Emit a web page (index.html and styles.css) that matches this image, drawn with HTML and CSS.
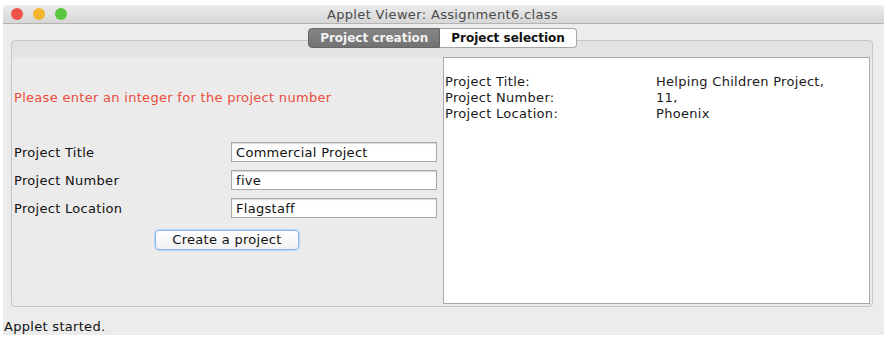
FILE: index.html
```html
<!DOCTYPE html>
<html>
<head>
<meta charset="utf-8">
<link rel="stylesheet" href="styles.css">
</head>
<body>
<div class="window">
  <div class="titlebar">
    <div class="lights">
      <span class="light red"></span>
      <span class="light yellow"></span>
      <span class="light green"></span>
    </div>
    <div class="title">Applet Viewer: Assignment6.class</div>
  </div>
  <div class="main">
    <div class="tabs">
      <span class="tab active">Project creation</span>
      <span class="tab">Project selection</span>
    </div>
    <div class="panel">
      <div class="leftcol">
        <div class="message">Please enter an integer for the project number</div>
        <div class="form">
          <label class="label">Project Title</label>
          <div class="field">Commercial Project</div>
          <label class="label">Project Number</label>
          <div class="field">five</div>
          <label class="label">Project Location</label>
          <div class="field">Flagstaff</div>
        </div>
        <div class="btnrow"><button class="button">Create a project</button></div>
      </div>
      <div class="textarea">
        <div class="info">
          <span>Project Title:</span><span>Helping Children Project,</span>
          <span>Project Number:</span><span>11,</span>
          <span>Project Location:</span><span>Phoenix</span>
        </div>
      </div>
    </div>
  </div>
  <div class="status">Applet started.</div>
</div>
</body>
</html>
```
FILE: styles.css
```css
html, body {
  margin: 0;
  padding: 0;
  background: #ffffff;
}
body {
  font-family: "DejaVu Sans", "Noto Sans", sans-serif;
  font-size: 13px;
  letter-spacing: 0.3px;
  color: #111;
}
.window {
  margin: 5px 0 0 3px;
  width: 881px;
  height: 330px;
  background: #ececec;
  border-radius: 4px 4px 0 0;
  display: flex;
  flex-direction: column;
  overflow: hidden;
}
.titlebar {
  height: 19px;
  border-bottom: 1px solid #b3b3b3;
  background: linear-gradient(#ebebeb, #d6d6d6);
  display: flex;
  align-items: center;
}
.lights {
  display: flex;
  gap: 10px;
  padding-left: 8px;
}
.light {
  width: 12px;
  height: 12px;
  border-radius: 50%;
  display: block;
}
.red { background: #f0524c; }
.yellow { background: #f6b52e; }
.green { background: #5ac63f; }
.title {
  flex: 1;
  text-align: center;
  font-size: 13px;
  letter-spacing: 0.35px;
  color: #4a4a4a;
  margin-left: -66px;
  padding-top: 1px;
}
.main {
  padding: 4px 11px 0 8px;
  display: flex;
  flex-direction: column;
}
.tabs {
  display: flex;
  justify-content: center;
  height: 20px;
  position: relative;
  z-index: 2;
  padding-left: 1px;
}
.tab {
  box-sizing: border-box;
  height: 20px;
  line-height: 18px;
  font-weight: bold;
  font-size: 12px;
  letter-spacing: 0;
  padding: 0 11px;
  background: #fdfdfd;
  border: 1px solid #a6a6a6;
  border-left: none;
  border-radius: 0 4px 4px 0;
  color: #111;
}
.tab.active {
  background: linear-gradient(#858585, #727272);
  color: #f2f2f2;
  border: 1px solid #666;
  border-radius: 4px 0 0 4px;
}
.panel {
  margin-top: -8px;
  height: 267px;
  box-sizing: border-box;
  border: 1px solid #c6c6c6;
  border-radius: 4px;
  background: linear-gradient(#e2e2e2 0, #e4e4e4 16px, #ebebeb 17px, #ebebeb);
  padding: 16px 2px 2px 0;
  display: flex;
}
.leftcol {
  width: 431px;
  display: flex;
  flex-direction: column;
}
.message {
  margin-top: 33px;
  line-height: 16px;
  color: #ea4d3c;
  padding-left: 2px;
}
.form {
  margin-top: 36px;
  display: grid;
  grid-template-columns: 219px 206px;
  grid-auto-rows: 20px;
  row-gap: 8px;
  align-items: center;
}
.label {
  padding-left: 2px;
  line-height: 22px;
  height: 20px;
}
.field {
  box-sizing: border-box;
  height: 20px;
  line-height: 19px;
  border: 1px solid #a8a8a8;
  box-shadow: inset 0 1px 1px #d8d8d8;
  background: #fff;
  padding-left: 4px;
}
.btnrow {
  margin-top: 12px;
  display: flex;
  justify-content: center;
  padding-right: 1px;
}
.button {
  width: 144px;
  height: 20px;
  box-sizing: border-box;
  border: 1px solid #86b6ea;
  border-radius: 4px;
  background: linear-gradient(#ffffff, #f1f1f1);
  box-shadow: 0 0 1px 1px #b9d6f5;
  font-family: "DejaVu Sans", "Noto Sans", sans-serif;
  font-size: 13px;
  letter-spacing: 0.3px;
  color: #111;
  padding: 0;
  line-height: 18px;
}
.textarea {
  flex: 1;
  box-sizing: border-box;
  background: #fff;
  border: 1px solid #a7a7a7;
  padding: 16px 0 0 1px;
}
.info {
  display: grid;
  grid-template-columns: 211px auto;
  line-height: 16px;
  color: #1a1a1a;
}
.status {
  padding: 12px 0 0 1px;
  line-height: 16px;
}
```
